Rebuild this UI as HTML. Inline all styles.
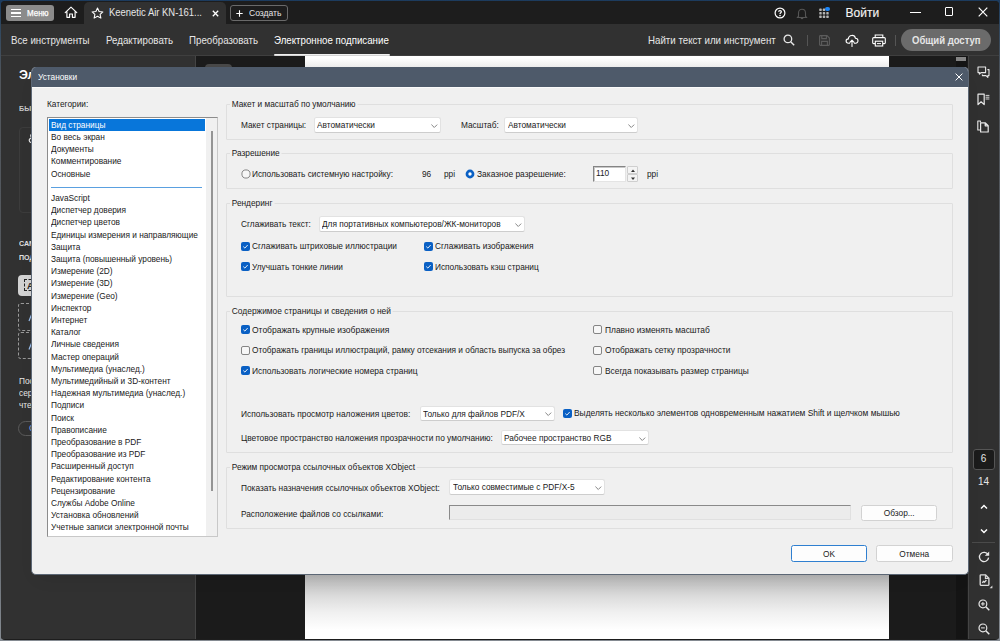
<!DOCTYPE html>
<html><head><meta charset="utf-8">
<style>
*{box-sizing:border-box;margin:0;padding:0}
html,body{width:1000px;height:641px;overflow:hidden}
body{background:linear-gradient(to bottom,#1c3b5e 0,#2a4560 3%,#50555b 12%,#5a5f65 80%,#858b92 100%);font-family:"Liberation Sans",sans-serif;position:relative}
.abs,.t,.gb,.dd,.cb,.rb,.spin,.spb,.tf,.btn,.list{position:absolute}
#win{position:absolute;left:1px;top:1px;width:997.8px;height:638.5px;background:#1d1d1d;border-radius:4px;overflow:hidden}
#dlg .t{font-size:9.5px;line-height:14px;height:14px;white-space:nowrap;color:#1a1a1a;transform:scaleX(0.873);transform-origin:0 50%;display:block}
.gb{border:1px solid #dfdfdf;border-radius:1px}
#dlg .gl{background:#f0f0f0;padding:0 2px 0 2px;margin-left:-0px}
.dd{background:#fff;border:1px solid #e2e2e2;border-bottom-color:#cdcdcd;border-radius:2.5px}
.dd .ar{position:absolute;right:2px;bottom:3.4px}
.cb{width:9.2px;height:9.2px;border:1px solid #858585;border-radius:2px;background:#f7f7f7}
.cb.on{background:#0a60c4;border:none}
.cb svg{position:absolute;left:0;top:0}
.rb{width:9.5px;height:9.5px;border:1px solid #6a6a6a;border-radius:50%;background:#f4f4f4}
.rb.on{border:3px solid #0a60c4;background:#fff}
.spin{background:#fff;border:1px solid #848484;border-right-color:#e4e4e4;border-bottom-color:#e4e4e4;box-shadow:inset 1px 1px 0 #c8c8c8}
.spb{width:11px;height:7.7px;background:#f4f4f4;border:1px solid #cfcfcf;border-radius:1px}
.spb svg{position:absolute;left:-0.5px;top:-0.5px}
.tf{background:#ececec;border:1px solid #8a8a8a;border-right-color:#e0e0e0;border-bottom-color:#e0e0e0}
.btn{background:#fdfdfd;border:1px solid #d2d2d2;border-radius:2.5px}
.btn.def{border-color:#2f7fd0}
.btn .tc{position:absolute;left:0;right:0;top:50%;margin-top:-7px;text-align:center;font-size:9.5px;line-height:14px;color:#1a1a1a;transform:scaleX(0.873);white-space:nowrap}
.list{background:#fff;border:1px solid #8c8c8c;border-right-color:#c8c8c8;border-bottom-color:#c8c8c8;overflow:hidden}
.li{position:absolute;left:1px;width:156px;height:12.2px}
.li.sel{background:#0876da}
#dlg .li.sel .t{color:#fff}
.sep{position:absolute;left:3px;width:151px;height:1px;background:#5aa0e0}
.sbtrack{position:absolute;right:0;top:0;bottom:0;width:11px;background:#f0f0f0}
.sbthumb{position:absolute;left:163px;top:13px;width:2px;height:360px;background:#949494}
.ct{position:absolute;font-size:10px;line-height:14px;height:14px;white-space:nowrap;color:#e6e6e6;transform-origin:0 50%;display:block}
.ct.tb{top:32.5px;font-size:10.5px;transform:scaleX(.925)}
#chrome{position:absolute;left:0;top:0}
#dlg{position:absolute;left:0;top:0}
#dlgbg{position:absolute;left:31px;top:66.8px;width:938.3px;height:507.8px;background:#f0f0f0;border-radius:5px;box-shadow:0 8px 18px -8px rgba(0,0,0,.12);border:1px solid #5c6775;border-top:none;overflow:hidden}
#dlgtitle{position:absolute;left:-1px;top:0;right:-1px;height:20.4px;background:#4e5a6a;border-bottom:0}
#dlghl{position:absolute;left:0;right:0;top:20.4px;height:1.2px;background:#fafafa}
</style></head><body>
<div id="win">
  <!-- title bar -->
  <div class="abs" style="left:0;top:0;width:998px;height:22.5px;background:#1d1d1d"></div>
  <div class="abs" style="left:0;top:22.5px;width:998px;height:31.5px;background:#313131"></div>
  <div class="abs" style="left:0;top:54px;width:998px;height:1px;background:#3f3f3f"></div>
  <!-- main area -->
  <div class="abs" style="left:0;top:55px;width:194px;height:583px;background:#313131"></div>
  <div class="abs" style="left:194px;top:55px;width:1px;height:583px;background:#444"></div>
  <div class="abs" style="left:195px;top:55px;width:109px;height:583px;background:#1b1b1b"></div>
  <div class="abs" style="left:304px;top:55px;width:584px;height:583px;background:#fff"></div>
  <div class="abs" style="left:304px;top:565px;width:584px;height:64px;background:linear-gradient(to bottom,#b0b0b0 0,#b6b6b6 14%,#c8c8c8 30%,#dedede 50%,#f0f0f0 72%,#fff 100%)"></div>
  <div class="abs" style="left:304px;top:57px;width:584px;height:12px;background:linear-gradient(to bottom,#fff 0,#e6e6e6 100%)"></div>
  <div class="abs" style="left:888px;top:55px;width:79px;height:583px;background:#1b1b1b"></div>
  <div class="abs" style="left:954.8px;top:55px;width:11px;height:583px;background:#141414"></div>
  <div class="abs" style="left:966.6px;top:55px;width:32px;height:583px;background:#303030;border-left:1px solid #444"></div>
</div>
<!-- CHROME START -->
<div id="chrome">
  <!-- menu button -->
  <div class="abs" style="left:6px;top:5px;width:48px;height:16px;background:#8b8b8b;border-radius:3px"></div>
  <div class="abs" style="left:11px;top:9px;width:10px;height:1.4px;background:#fff"></div>
  <div class="abs" style="left:11px;top:12.3px;width:10px;height:1.4px;background:#fff"></div>
  <div class="abs" style="left:11px;top:15.6px;width:10px;height:1.4px;background:#fff"></div>
  <span class="ct" style="left:26.5px;top:6px;font-size:8.5px;color:#fff;-webkit-text-stroke:.25px #fff;transform:scaleX(.94)">Меню</span>
  <!-- home -->
  <svg class="abs" style="left:63.5px;top:6px" width="14" height="13" viewBox="0 0 14 13"><path d="M1.2 6.6 L7 1.2 L12.8 6.6 M2.9 5.4 V11.3 H5.6 V8 H8.4 V11.3 H11.1 V5.4" fill="none" stroke="#fff" stroke-width="1.15" stroke-linejoin="round" stroke-linecap="round"/></svg>
  <!-- tab -->
  <div class="abs" style="left:84px;top:2px;width:142px;height:22px;background:#313131;border-radius:5px 5px 0 0"></div>
  <svg class="abs" style="left:91px;top:7px" width="13" height="12" viewBox="0 0 13 12"><path d="M6.5 1 L8.1 4.5 L11.9 4.9 L9.1 7.4 L9.9 11.1 L6.5 9.2 L3.1 11.1 L3.9 7.4 L1.1 4.9 L4.9 4.5 Z" fill="none" stroke="#fff" stroke-width="1.05" stroke-linejoin="round"/></svg>
  <span class="ct" style="left:108.6px;top:5.5px;font-size:10px;transform:scaleX(.945)">Keenetic Air KN-161...</span>
  <svg class="abs" style="left:212px;top:10px" width="7" height="7" viewBox="0 0 7 7"><path d="M0.8 0.8 L6.2 6.2 M6.2 0.8 L0.8 6.2" stroke="#fff" stroke-width="1.3"/></svg>
  <!-- create -->
  <div class="abs" style="left:229.5px;top:5px;width:58.5px;height:16px;border:1px solid #6a6a6a;border-radius:3px"></div>
  <svg class="abs" style="left:236px;top:9.5px" width="7" height="7" viewBox="0 0 7 7"><path d="M3.5 0.3 V6.7 M0.3 3.5 H6.7" stroke="#fff" stroke-width="1.1"/></svg>
  <span class="ct" style="left:249.4px;top:6px;font-size:9px;transform:scaleX(.95)">Создать</span>

  <!-- right title icons -->
  <svg class="abs" style="left:774px;top:6.5px" width="12" height="12" viewBox="0 0 12 12"><circle cx="6" cy="6" r="4.9" fill="none" stroke="#fff" stroke-width="1.2"/><path d="M4.6 4.7 C4.6 3.2 7.4 3.2 7.4 4.7 C7.4 5.7 6 5.7 6 6.9" fill="none" stroke="#fff" stroke-width="1.2"/><circle cx="6" cy="8.6" r="0.8" fill="#fff"/></svg>
  <svg class="abs" style="left:796px;top:6.5px" width="12" height="13" viewBox="0 0 12 13"><path d="M2.5 9.5 V6 C2.5 1 9.5 1 9.5 6 V9.5 L10.8 10.5 H1.2 Z" fill="none" stroke="#555" stroke-width="1.1" stroke-linejoin="round"/><path d="M4.8 11.5 H7.2" stroke="#555" stroke-width="1.2"/></svg>
  <svg class="abs" style="left:818.5px;top:8px" width="11" height="11" viewBox="0 0 11 11"><g fill="#b4b4b4"><rect x="0.3" y="0.6" width="2.4" height="2.4" rx=".6"/><rect x="3.8" y="0.6" width="2.4" height="2.4" rx=".6"/><rect x="0.3" y="4.1" width="2.4" height="2.4" rx=".6"/><rect x="3.8" y="4.1" width="2.4" height="2.4" rx=".6"/><rect x="7.3" y="4.1" width="2.4" height="2.4" rx=".6"/><rect x="0.3" y="7.6" width="2.4" height="2.4" rx=".6"/><rect x="3.8" y="7.6" width="2.4" height="2.4" rx=".6"/><rect x="7.3" y="7.6" width="2.4" height="2.4" rx=".6"/></g></svg>
  <div class="abs" style="left:825px;top:6.8px;width:4.6px;height:4.6px;border-radius:50%;background:#1c86f8"></div>
  <span class="ct" style="left:845.5px;top:4.5px;font-size:12px;line-height:16px;-webkit-text-stroke:.12px #f4f4f4;color:#f4f4f4">Войти</span>
  <div class="abs" style="left:910px;top:12px;width:10.5px;height:1.3px;background:#fff"></div>
  <div class="abs" style="left:944.8px;top:7.4px;width:8.6px;height:8.4px;border:1.1px solid #fff;border-radius:1px"></div>
  <svg class="abs" style="left:977.5px;top:7px" width="10" height="10" viewBox="0 0 10 10"><path d="M0.7 0.7 L9.3 9.3 M9.3 0.7 L0.7 9.3" stroke="#fff" stroke-width="1.2"/></svg>

  <!-- toolbar -->
  <span class="ct tb" style="left:10.5px">Все инструменты</span>
  <span class="ct tb" style="left:106px">Редактировать</span>
  <span class="ct tb" style="left:189.3px">Преобразовать</span>
  <span class="ct tb" style="left:274px;color:#fff">Электронное подписание</span>
  <div class="abs" style="left:274px;top:53.7px;width:115.5px;height:2.4px;background:linear-gradient(to bottom,#f0f0f0 0,#f0f0f0 55%,#b4b4b4 100%);border-radius:1px"></div>
  <span class="ct tb" style="left:648px">Найти текст или инструмент</span>
  <svg class="abs" style="left:783px;top:34px" width="12" height="12" viewBox="0 0 12 12"><circle cx="4.9" cy="4.9" r="3.8" fill="none" stroke="#e8e8e8" stroke-width="1.3"/><path d="M7.7 7.7 L11.2 11.2" stroke="#e8e8e8" stroke-width="1.4"/></svg>
  <div class="abs" style="left:807px;top:35px;width:1px;height:10.5px;background:#555"></div>
  <svg class="abs" style="left:819px;top:34.5px" width="11" height="11" viewBox="0 0 11 11"><path d="M0.6 1.4 Q0.6 0.6 1.4 0.6 H8 L10.4 3 V9.6 Q10.4 10.4 9.6 10.4 H1.4 Q0.6 10.4 0.6 9.6 Z M2.8 0.6 V3.6 H7.4 V0.6 M2.6 10.4 V6.4 H8.4 V10.4" fill="none" stroke="#5c5c5c" stroke-width="1.1"/></svg>
  <svg class="abs" style="left:844.5px;top:33.5px" width="14" height="13" viewBox="0 0 14 13"><path d="M4.6 9.2 H3.6 C0.3 9.2 0.3 5 3.4 4.9 C3.6 0.6 9.6 0.2 10.4 4.2 C13.8 4.3 13.8 9.2 10.6 9.2 H9.4" fill="none" stroke="#fff" stroke-width="1.1" stroke-linecap="round"/><path d="M7 12.4 V6.4 M4.9 8.3 L7 6.1 L9.1 8.3" fill="none" stroke="#fff" stroke-width="1.1" stroke-linecap="round" stroke-linejoin="round"/></svg>
  <svg class="abs" style="left:871.5px;top:33.5px" width="14" height="13" viewBox="0 0 14 13"><path d="M3.2 3.4 V1 H10.8 V3.4" fill="none" stroke="#fff" stroke-width="1.1"/><path d="M3.2 9.6 H1.6 Q0.7 9.6 0.7 8.7 V4.6 Q0.7 3.6 1.7 3.6 H12.3 Q13.3 3.6 13.3 4.6 V8.7 Q13.3 9.6 12.4 9.6 H10.8" fill="none" stroke="#fff" stroke-width="1.1"/><rect x="3.3" y="7.2" width="7.4" height="4.8" fill="none" stroke="#fff" stroke-width="1.1"/><path d="M5 9.6 H9" stroke="#fff" stroke-width="1"/></svg>
  <div class="abs" style="left:895px;top:35px;width:1px;height:10.5px;background:#555"></div>
  <div class="abs" style="left:901px;top:29px;width:90px;height:22px;background:#6b6b6b;border-radius:11px"></div>
  <span class="ct" style="left:911.6px;top:33px;font-size:10.5px;font-weight:bold;transform:scaleX(.906)">Общий доступ</span>

  <!-- left panel content -->
  <span class="ct" style="left:19px;top:68px;font-size:12.5px;font-weight:bold;color:#fff">Эл</span>
  <span class="ct" style="left:19px;top:102px;font-size:8px;font-weight:bold;color:#c8c8c8;transform:scaleX(.9)">БЫ</span>
  <div class="abs" style="left:19px;top:127px;width:60px;height:86px;border:1px solid #3c3c3c;border-radius:4px"></div>
  <svg class="abs" style="left:26.5px;top:133px" width="8" height="12" viewBox="0 0 8 12"><path d="M6 1 C3 1 3 4.5 5.5 5 C1 5 1 10 6.5 10" fill="none" stroke="#e8e8e8" stroke-width="1.2"/></svg>
  <span class="ct" style="left:18.7px;top:237px;font-size:7.5px;font-weight:bold;color:#e0e0e0;transform:scaleX(.95)">САМ</span>
  <span class="ct" style="left:18.7px;top:251px;font-size:7.5px;font-weight:bold;color:#e0e0e0;transform:scaleX(.95)">ПОД</span>
  <div class="abs" style="left:18px;top:275px;width:40px;height:21px;background:#d2d2d2;border-radius:4px"></div>
  <div class="abs" style="left:23.5px;top:279px;width:12px;height:12px;border:1.3px dashed #222"></div>
  <span class="ct" style="left:27px;top:278.5px;font-size:9px;font-weight:bold;color:#222">A</span>
  <div class="abs" style="left:18px;top:303px;width:60px;height:27.5px;border:1px dashed #9a9a9a;border-radius:3px"></div>
  <div class="abs" style="left:18px;top:331.5px;width:60px;height:27.5px;border:1px dashed #9a9a9a;border-radius:3px"></div>
  <svg class="abs" style="left:26px;top:310px" width="8" height="50" viewBox="0 0 8 50"><path d="M3 11 L6 3.5 M3 39.5 L6 32" stroke="#9cc0f0" stroke-width="1.2"/></svg>
  <span class="ct" style="left:18.7px;top:374.2px;font-size:9px;transform:scaleX(.92)">Пос</span>
  <span class="ct" style="left:18.7px;top:386.2px;font-size:9px;transform:scaleX(.92)">серт</span>
  <span class="ct" style="left:18.7px;top:397.5px;font-size:9px;transform:scaleX(.92)">чтен</span>
  <div class="abs" style="left:18px;top:420.5px;width:60px;height:15px;border:1px solid #5a5a5a;border-radius:8px"></div>
  <span class="ct" style="left:29px;top:420.5px;font-size:8.5px;color:#8ab4f0">С</span>

  <!-- thing above dialog -->
  <div class="abs" style="left:204.5px;top:64px;width:27px;height:14px;background:#484848;border-radius:4px"></div>
  <!-- scrollbar bit -->
  <div class="abs" style="left:955.8px;top:57px;width:10px;height:3.8px;background:#858585"></div>

  <!-- right sidebar icons -->
  <svg class="abs" style="left:977px;top:66px" width="13" height="13" viewBox="0 0 13 13"><path d="M1 1 H8.6 V6.6 H4 L2.4 8.2 V6.6 H1 Z" fill="none" stroke="#e8e8e8" stroke-width="1.1" stroke-linejoin="round"/><path d="M10.4 3.6 H12 V9.6 H10.8 V11.4 L9 9.6 H5.4 V8.4" fill="none" stroke="#e8e8e8" stroke-width="1.1" stroke-linejoin="round"/></svg>
  <svg class="abs" style="left:977px;top:93px" width="13" height="13" viewBox="0 0 13 13"><path d="M1 1.2 H7.2 V11.6 L4.1 8.8 L1 11.6 Z" fill="none" stroke="#e8e8e8" stroke-width="1.2" stroke-linejoin="round"/><path d="M8.6 2.4 H12.4 M8.6 4.2 H12.4 M8.6 6 H12.4" stroke="#e8e8e8" stroke-width="0.9"/></svg>
  <svg class="abs" style="left:977px;top:120px" width="13" height="13" viewBox="0 0 13 13"><path d="M3.4 2.6 V1 H0.8 V10 H3" fill="none" stroke="#e8e8e8" stroke-width="1.1" stroke-linejoin="round"/><path d="M3.6 2.8 H8.4 L11.2 5.6 V12 H3.6 Z M8.2 3 V5.8 H11" fill="none" stroke="#e8e8e8" stroke-width="1.2" stroke-linejoin="round"/></svg>

  <div class="abs" style="left:972.5px;top:449px;width:22px;height:20.5px;background:#1b1b1b;border:1px solid #555;border-radius:3px"></div>
  <span class="ct" style="left:972.5px;top:452px;width:22px;text-align:center;font-size:10px">6</span>
  <span class="ct" style="left:972.5px;top:475px;width:22px;text-align:center;font-size:10px">14</span>
  <svg class="abs" style="left:979.5px;top:504.4px" width="8" height="6" viewBox="0 0 8 6"><path d="M1 4.6 L4 1.4 L7 4.6" fill="none" stroke="#fff" stroke-width="1.4"/></svg>
  <svg class="abs" style="left:979.5px;top:527.5px" width="8" height="6" viewBox="0 0 8 6"><path d="M1 1.4 L4 4.6 L7 1.4" fill="none" stroke="#fff" stroke-width="1.4"/></svg>
  <div class="abs" style="left:972px;top:541.8px;width:23px;height:1px;background:#4a4a4a"></div>
  <svg class="abs" style="left:978px;top:551px" width="12" height="12" viewBox="0 0 12 12"><path d="M10 3.6 A4.6 4.6 0 1 0 10.6 6.6" fill="none" stroke="#e8e8e8" stroke-width="1.3"/><path d="M11.2 0.4 V4.8 H6.8 Z" fill="#e8e8e8"/></svg>
  <svg class="abs" style="left:977.6px;top:572.6px" width="15" height="16" viewBox="0 0 15 16"><path d="M2.2 2.6 Q2.2 1.9 2.9 1.9 H7.6 L10.9 5.2 V11.6 Q10.9 12.3 10.2 12.3 H2.9 Q2.2 12.3 2.2 11.6 Z" fill="none" stroke="#dcdcdc" stroke-width="1.35"/><path d="M7.4 2.2 V5.4 H10.6" fill="none" stroke="#dcdcdc" stroke-width="1.1"/><path d="M4.2 9.8 L5.6 8.4 L6.6 9.2 L8.4 7" fill="none" stroke="#dcdcdc" stroke-width="1.3"/><path d="M14.4 12.4 V15.2 H11.6 Z" fill="#dcdcdc"/></svg>
  <svg class="abs" style="left:978px;top:599px" width="12" height="12" viewBox="0 0 12 12"><circle cx="4.9" cy="4.9" r="3.9" fill="none" stroke="#e8e8e8" stroke-width="1.2"/><path d="M7.8 7.8 L11.3 11.3" stroke="#e8e8e8" stroke-width="1.5"/><path d="M3 4.9 H6.8 M4.9 3 V6.8" stroke="#e8e8e8" stroke-width="1"/></svg>
  <svg class="abs" style="left:978px;top:623px" width="12" height="12" viewBox="0 0 12 12"><circle cx="4.9" cy="4.9" r="3.9" fill="none" stroke="#e8e8e8" stroke-width="1.2"/><path d="M7.8 7.8 L11.3 11.3" stroke="#e8e8e8" stroke-width="1.5"/><path d="M3 4.9 H6.8" stroke="#e8e8e8" stroke-width="1"/></svg>
</div>
<!-- CHROME END -->

<div id="dlgbg"><div id="dlgtitle"></div><div id="dlghl"></div></div>
<div id="dlg">
<span class="t" style="left:38px;top:70.3px;color:#fff">Установки</span>
<svg class="abs" style="left:954.6px;top:72.7px" width="8" height="8" viewBox="0 0 8 8"><path d="M0.6 0.6 L7.4 7.4 M7.4 0.6 L0.6 7.4" stroke="#fff" stroke-width="1"/></svg>
<span class="t " style="left:46.9px;top:97.4px;">Категории:</span>
<div class="list" style="left:47px;top:117px;width:171px;height:420px"><div class="li sel" style="top:0.8px"><span class="t" style="left:2px;top:-1px">Вид страницы</span></div><div class="li" style="top:13.0px"><span class="t" style="left:2px;top:-1px">Во весь экран</span></div><div class="li" style="top:25.2px"><span class="t" style="left:2px;top:-1px">Документы</span></div><div class="li" style="top:37.4px"><span class="t" style="left:2px;top:-1px">Комментирование</span></div><div class="li" style="top:49.6px"><span class="t" style="left:2px;top:-1px">Основные</span></div><div class="sep" style="top:68.5px"></div><div class="li" style="top:74.0px"><span class="t" style="left:2px;top:-1px">JavaScript</span></div><div class="li" style="top:86.2px"><span class="t" style="left:2px;top:-1px">Диспетчер доверия</span></div><div class="li" style="top:98.4px"><span class="t" style="left:2px;top:-1px">Диспетчер цветов</span></div><div class="li" style="top:110.6px"><span class="t" style="left:2px;top:-1px">Единицы измерения и направляющие</span></div><div class="li" style="top:122.8px"><span class="t" style="left:2px;top:-1px">Защита</span></div><div class="li" style="top:135.0px"><span class="t" style="left:2px;top:-1px">Защита (повышенный уровень)</span></div><div class="li" style="top:147.2px"><span class="t" style="left:2px;top:-1px">Измерение (2D)</span></div><div class="li" style="top:159.4px"><span class="t" style="left:2px;top:-1px">Измерение (3D)</span></div><div class="li" style="top:171.6px"><span class="t" style="left:2px;top:-1px">Измерение (Geo)</span></div><div class="li" style="top:183.8px"><span class="t" style="left:2px;top:-1px">Инспектор</span></div><div class="li" style="top:196.0px"><span class="t" style="left:2px;top:-1px">Интернет</span></div><div class="li" style="top:208.2px"><span class="t" style="left:2px;top:-1px">Каталог</span></div><div class="li" style="top:220.4px"><span class="t" style="left:2px;top:-1px">Личные сведения</span></div><div class="li" style="top:232.6px"><span class="t" style="left:2px;top:-1px">Мастер операций</span></div><div class="li" style="top:244.8px"><span class="t" style="left:2px;top:-1px">Мультимедиа (унаслед.)</span></div><div class="li" style="top:257.0px"><span class="t" style="left:2px;top:-1px">Мультимедийный и 3D-контент</span></div><div class="li" style="top:269.2px"><span class="t" style="left:2px;top:-1px">Надежная мультимедиа (унаслед.)</span></div><div class="li" style="top:281.4px"><span class="t" style="left:2px;top:-1px">Подписи</span></div><div class="li" style="top:293.6px"><span class="t" style="left:2px;top:-1px">Поиск</span></div><div class="li" style="top:305.8px"><span class="t" style="left:2px;top:-1px">Правописание</span></div><div class="li" style="top:318.0px"><span class="t" style="left:2px;top:-1px">Преобразование в PDF</span></div><div class="li" style="top:330.2px"><span class="t" style="left:2px;top:-1px">Преобразование из PDF</span></div><div class="li" style="top:342.4px"><span class="t" style="left:2px;top:-1px">Расширенный доступ</span></div><div class="li" style="top:354.6px"><span class="t" style="left:2px;top:-1px">Редактирование контента</span></div><div class="li" style="top:366.8px"><span class="t" style="left:2px;top:-1px">Рецензирование</span></div><div class="li" style="top:379.0px"><span class="t" style="left:2px;top:-1px">Службы Adobe Online</span></div><div class="li" style="top:391.2px"><span class="t" style="left:2px;top:-1px">Установка обновлений</span></div><div class="li" style="top:403.4px"><span class="t" style="left:2px;top:-1px">Учетные записи электронной почты</span></div><div class="sbtrack"></div><div class="sbthumb"></div></div>
<div class="gb" style="left:226px;top:104px;width:727px;height:35.5px"></div>
<span class="t gl" style="left:230px;top:97px;transform:scaleX(0.873)">Макет и масштаб по умолчанию</span>
<span class="t " style="left:241.2px;top:118px;">Макет страницы:</span>
<div class="dd" style="left:313.7px;top:117px;width:127.0px;height:15.699999999999989px"><span class="t" style="left:2.5px;top:0.19999999999998863px">Автоматически</span><svg class="ar" viewBox="0 0 8 5" width="6.6" height="4.2"><path d="M0.5 0.7 L4 4.2 L7.5 0.7" fill="none" stroke="#6a6a6a" stroke-width="1"/></svg></div>
<span class="t " style="left:460.7px;top:118px;">Масштаб:</span>
<div class="dd" style="left:504px;top:117px;width:133.70000000000005px;height:15.699999999999989px"><span class="t" style="left:2.5px;top:0.19999999999998863px">Автоматически</span><svg class="ar" viewBox="0 0 8 5" width="6.6" height="4.2"><path d="M0.5 0.7 L4 4.2 L7.5 0.7" fill="none" stroke="#6a6a6a" stroke-width="1"/></svg></div>
<div class="gb" style="left:226px;top:153.2px;width:727px;height:35.5px"></div>
<span class="t gl" style="left:230px;top:146.2px;transform:scaleX(0.873)">Разрешение</span>
<svg class="abs" style="left:240.8px;top:169px" width="10" height="10" viewBox="0 0 10 10"><circle cx="5" cy="5" r="4.1" fill="#f6f6f6" stroke="#7a7a7a" stroke-width="0.9"/></svg>
<span class="t " style="left:252.1px;top:167px;">Использовать системную настройку:</span>
<span class="t " style="left:421.5px;top:167px;">96</span>
<span class="t " style="left:443.6px;top:167px;">ppi</span>
<svg class="abs" style="left:464.8px;top:169px" width="10" height="10" viewBox="0 0 10 10"><circle cx="5" cy="5" r="3.05" fill="#fff" stroke="#0a60c4" stroke-width="2.7"/></svg>
<span class="t " style="left:476.8px;top:167px;transform:scaleX(0.886095);">Заказное разрешение:</span>
<div class="spin" style="left:592.6px;top:166px;width:33.2px;height:15.5px"><span class="t" style="left:2px;top:-0.6px">110</span></div>
<div class="spb" style="left:627.2px;top:166.4px"><svg viewBox="0 0 10 7" width="10" height="7"><path d="M3 5 L5 2.5 L7 5Z" fill="#333"/></svg></div>
<div class="spb" style="left:627.2px;top:174px"><svg viewBox="0 0 10 7" width="10" height="7"><path d="M3 2.5 L5 5 L7 2.5Z" fill="#333"/></svg></div>
<span class="t " style="left:647.3px;top:167px;">ppi</span>
<div class="gb" style="left:226px;top:202.6px;width:727px;height:94.70000000000002px"></div>
<span class="t gl" style="left:230px;top:195.6px;transform:scaleX(0.873)">Рендеринг</span>
<span class="t " style="left:241.2px;top:217px;">Сглаживать текст:</span>
<div class="dd" style="left:318.9px;top:216px;width:205.89999999999998px;height:15.699999999999989px"><span class="t" style="left:2.5px;top:0.19999999999998863px">Для портативных компьютеров/ЖК-мониторов</span><svg class="ar" viewBox="0 0 8 5" width="6.6" height="4.2"><path d="M0.5 0.7 L4 4.2 L7.5 0.7" fill="none" stroke="#6a6a6a" stroke-width="1"/></svg></div>
<div class="cb on" style="left:241.3px;top:241.5px"><svg viewBox="0 0 9 9" width="9" height="9"><path d="M2.3 4.6 L3.9 6.1 L6.7 3" fill="none" stroke="#eef3fb" stroke-width="0.95"/></svg></div>
<span class="t " style="left:252.1px;top:239px;">Сглаживать штриховые иллюстрации</span>
<div class="cb on" style="left:424.3px;top:241.5px"><svg viewBox="0 0 9 9" width="9" height="9"><path d="M2.3 4.6 L3.9 6.1 L6.7 3" fill="none" stroke="#eef3fb" stroke-width="0.95"/></svg></div>
<span class="t " style="left:434.7px;top:239px;">Сглаживать изображения</span>
<div class="cb on" style="left:241.3px;top:262.0px"><svg viewBox="0 0 9 9" width="9" height="9"><path d="M2.3 4.6 L3.9 6.1 L6.7 3" fill="none" stroke="#eef3fb" stroke-width="0.95"/></svg></div>
<span class="t " style="left:252.1px;top:259.5px;">Улучшать тонкие линии</span>
<div class="cb on" style="left:424.3px;top:262.0px"><svg viewBox="0 0 9 9" width="9" height="9"><path d="M2.3 4.6 L3.9 6.1 L6.7 3" fill="none" stroke="#eef3fb" stroke-width="0.95"/></svg></div>
<span class="t " style="left:434.7px;top:259.5px;">Использовать кэш страниц</span>
<div class="gb" style="left:226px;top:311.2px;width:727px;height:141.60000000000002px"></div>
<span class="t gl" style="left:230px;top:304.2px;transform:scaleX(0.883476)">Содержимое страницы и сведения о ней</span>
<div class="cb on" style="left:241.3px;top:325.2px"><svg viewBox="0 0 9 9" width="9" height="9"><path d="M2.3 4.6 L3.9 6.1 L6.7 3" fill="none" stroke="#eef3fb" stroke-width="0.95"/></svg></div>
<span class="t " style="left:252.1px;top:322.7px;transform:scaleX(0.893079);">Отображать крупные изображения</span>
<div class="cb" style="left:241.3px;top:345.7px"></div>
<span class="t " style="left:252.1px;top:343.2px;transform:scaleX(0.873);">Отображать границы иллюстраций, рамку отсекания и область выпуска за обрез</span>
<div class="cb on" style="left:241.3px;top:366.2px"><svg viewBox="0 0 9 9" width="9" height="9"><path d="M2.3 4.6 L3.9 6.1 L6.7 3" fill="none" stroke="#eef3fb" stroke-width="0.95"/></svg></div>
<span class="t " style="left:252.1px;top:363.7px;transform:scaleX(0.8852220000000001);">Использовать логические номера страниц</span>
<div class="cb" style="left:593px;top:325.2px"></div>
<span class="t " style="left:604.6px;top:322.7px;transform:scaleX(0.88173);">Плавно изменять масштаб</span>
<div class="cb" style="left:593px;top:345.7px"></div>
<span class="t " style="left:604.6px;top:343.2px;transform:scaleX(0.88173);">Отображать сетку прозрачности</span>
<div class="cb" style="left:593px;top:366.2px"></div>
<span class="t " style="left:604.6px;top:363.7px;transform:scaleX(0.88173);">Всегда показывать размер страницы</span>
<span class="t " style="left:241.2px;top:406.5px;transform:scaleX(0.88173);">Использовать просмотр наложения цветов:</span>
<div class="dd" style="left:419.6px;top:405.5px;width:135.19999999999993px;height:15.5px"><span class="t" style="left:2.5px;top:0.0px">Только для файлов PDF/X</span><svg class="ar" viewBox="0 0 8 5" width="6.6" height="4.2"><path d="M0.5 0.7 L4 4.2 L7.5 0.7" fill="none" stroke="#6a6a6a" stroke-width="1"/></svg></div>
<div class="cb on" style="left:562.8px;top:408.5px"><svg viewBox="0 0 9 9" width="9" height="9"><path d="M2.3 4.6 L3.9 6.1 L6.7 3" fill="none" stroke="#eef3fb" stroke-width="0.95"/></svg></div>
<span class="t " style="left:573.6px;top:406.3px;transform:scaleX(0.883476);">Выделять несколько элементов одновременным нажатием Shift и щелчком мышью</span>
<span class="t " style="left:241.2px;top:431px;transform:scaleX(0.8791109999999999);">Цветовое пространство наложения прозрачности по умолчанию:</span>
<div class="dd" style="left:500.8px;top:429.8px;width:147.90000000000003px;height:15.699999999999989px"><span class="t" style="left:2.5px;top:0.19999999999998863px">Рабочее пространство RGB</span><svg class="ar" viewBox="0 0 8 5" width="6.6" height="4.2"><path d="M0.5 0.7 L4 4.2 L7.5 0.7" fill="none" stroke="#6a6a6a" stroke-width="1"/></svg></div>
<div class="gb" style="left:226px;top:467px;width:727px;height:61.5px"></div>
<span class="t gl" style="left:230px;top:460px;transform:scaleX(0.873)">Режим просмотра ссылочных объектов XObject</span>
<span class="t " style="left:241.2px;top:480.5px;">Показать назначения ссылочных объектов XObject:</span>
<div class="dd" style="left:449px;top:479.3px;width:155.70000000000005px;height:15.699999999999989px"><span class="t" style="left:2.5px;top:0.19999999999998863px">Только совместимые с PDF/X-5</span><svg class="ar" viewBox="0 0 8 5" width="6.6" height="4.2"><path d="M0.5 0.7 L4 4.2 L7.5 0.7" fill="none" stroke="#6a6a6a" stroke-width="1"/></svg></div>
<span class="t " style="left:241.2px;top:506.5px;">Расположение файлов со ссылками:</span>
<div class="tf" style="left:449px;top:505px;width:402px;height:15px"></div>
<div class="btn " style="left:860.5px;top:504.6px;width:76.5px;height:16.799999999999955px"><span class="tc">Обзор...</span></div>
<div class="btn def" style="left:791px;top:545.3px;width:76px;height:17.0px"><span class="tc">OK</span></div>
<div class="btn " style="left:876.2px;top:545.3px;width:76.5px;height:17.0px"><span class="tc">Отмена</span></div>
</div>
</body></html>
